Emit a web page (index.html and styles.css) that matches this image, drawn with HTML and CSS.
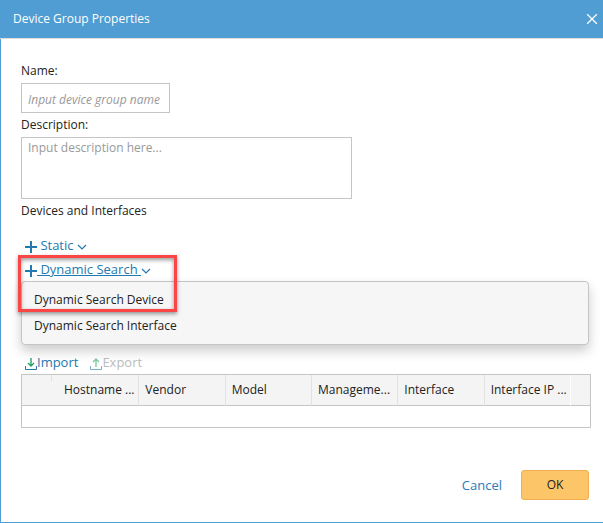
FILE: index.html
```html
<!DOCTYPE html>
<html lang="en">
<head>
<meta charset="utf-8">
<title>Device Group Properties</title>
<link rel="stylesheet" href="styles.css">
</head>
<body>
<form class="dialog">
  <header class="dialog-header">
    <h1 class="dialog-title">Device Group Properties</h1>
    <button class="close" type="button" aria-label="Close">
      <svg width="12" height="12" viewBox="0 0 12 12"><path d="M1.2 1.2 10.8 10.8M10.8 1.2 1.2 10.8"/></svg>
    </button>
  </header>
  <main class="dialog-body">
    <label class="label" for="name">Name:</label>
    <input class="field name" id="name" type="text" placeholder="Input device group name ...">
    <label class="label" for="description">Description:</label>
    <textarea class="field description" id="description" placeholder="Input description here..."></textarea>
    <p class="label">Devices and Interfaces</p>

    <div class="adders">
      <button class="action" type="button">
        <svg class="plus" width="12" height="12" viewBox="0 0 12 12"><path d="M6 0V12M0 6H12"/></svg>
        <span class="action-text">&nbsp;Static&nbsp;</span>
        <svg class="chevron" width="10" height="6" viewBox="0 0 10 6"><path d="M1 1 5 5 9 1"/></svg>
      </button>
      <div class="dynamic">
        <button class="action active" type="button">
          <svg class="plus" width="12" height="12" viewBox="0 0 12 12"><path d="M6 0V12M0 6H12"/></svg>
          <span class="action-text">&nbsp;Dynamic Search&nbsp;</span>
          <svg class="chevron" width="10" height="6" viewBox="0 0 10 6"><path d="M1 1 5 5 9 1"/></svg>
        </button>
        <div class="menu">
          <button class="menu-item" type="button">Dynamic Search Device</button>
          <button class="menu-item" type="button">Dynamic Search Interface</button>
        </div>
        <div class="callout"></div>
      </div>
    </div>

    <div class="transfer">
      <button class="action" type="button">
        <svg class="tray" width="12" height="12" viewBox="0 0 12 12"><path class="arrow" d="M6 0V8M3 5 6 8 9 5"/><path class="base" d="M.5 8V11.500H11.500V8"/></svg>
        <span>Import</span>
      </button>
      <button class="action" type="button" disabled>
        <svg class="tray" width="12" height="12" viewBox="0 0 12 12"><path class="arrow" d="M6 9V1M3 4 6 1 9 4"/><path class="base" d="M.5 8V11.500H11.500V8"/></svg>
        <span>Export</span>
      </button>
    </div>

    <table class="grid">
      <colgroup><col class="col-check"><col><col><col><col><col><col><col class="col-end"></colgroup>
      <thead>
        <tr><th class="check"></th><th>Hostname ...</th><th>Vendor</th><th>Model</th><th>Manageme...</th><th>Interface</th><th class="last">Interface IP ...</th><th class="end"></th></tr>
      </thead>
      <tbody><tr><td colspan="8"></td></tr></tbody>
    </table>
  </main>
  <footer class="dialog-footer">
    <button class="cancel" type="button">Cancel</button>
    <button class="ok" type="submit">OK</button>
  </footer>
</form>
</body>
</html>
```
FILE: styles.css
```css
* { box-sizing: border-box; }

body {
  margin: 0;
  font: 12px/24px "Open Sans", sans-serif;
  color: #222;
}

button {
  font: inherit;
  color: inherit;
  background: none;
  border: 0;
  padding: 0;
}

svg { fill: none; flex: none; }

.dialog {
  display: flex;
  flex-direction: column;
  min-height: 100vh;
  background: #fff;
  border: solid #4f9dd2;
  border-width: 0 0 1px 1px;
}

.dialog-header {
  display: flex;
  align-items: center;
  justify-content: space-between;
  height: 39px;
  padding: 0 5px 0 13px;
  margin-left: -1px;
  background: #4f9dd2;
  border-bottom: 1px solid #dcdcdc;
  color: #fff;
}

.dialog-title {
  margin: 0;
  font-size: 12px;
  font-weight: 500;
}

.close { display: flex; }
.close svg { stroke: #fff; stroke-width: 1.3; }

.dialog-body { padding: 20px 12px 0 20px; }

.label {
  display: block;
  margin: 0;
}

.field {
  display: block;
  border: 1px solid #c5c5c5;
  border-radius: 0;
  padding: 0 6px;
  background: #fff;
  font: 12px/20px "Open Sans", sans-serif;
  color: #222;
  resize: none;
}

.field::placeholder { color: #999; }
.name { width: 149px; height: 30px; padding: 2px 6px 0; }
.name::placeholder { font-style: italic; }
.description { width: 331px; height: 62px; }

.adders { margin-top: 10px; }

.action {
  display: flex;
  align-items: center;
  height: 24px;
  padding-left: 4px;
  font-size: 13px;
  color: #2279b0;
}

.action:disabled { color: #bbb; }
.active .action-text { text-decoration: underline; }
.plus { stroke: #2279b0; stroke-width: 2; margin-top: 4px; }
.chevron { stroke: #2279b0; stroke-width: 1.2; margin-top: 4px; }

.dynamic { position: relative; }

.menu {
  display: flex;
  flex-direction: column;
  margin-right: 2px;
  padding: 5px 0;
  background: #f6f6f6;
  border: 1px solid #c5c5c5;
  border-radius: 4px;
  box-shadow: 0 6px 12px rgba(0, 0, 0, .2);
}

.menu-item {
  height: 26px;
  padding-left: 12px;
  text-align: left;
}

.callout {
  position: absolute;
  top: -2px;
  left: -3px;
  width: 159px;
  height: 57px;
  border: 3px solid #fb4646;
  box-shadow: 0 2px 4px rgba(0, 0, 0, .4), inset 0 2px 4px rgba(0, 0, 0, .4);
  pointer-events: none;
}

.transfer {
  display: flex;
  gap: 8px;
  margin-top: 5px;
}

.tray { margin-top: 3px; }
.arrow { stroke: #27a668; stroke-width: 1.4; }
.base { stroke: #2279b0; }
:disabled .tray { opacity: .6; }

.grid {
  width: 100%;
  table-layout: fixed;
  border-collapse: separate;
  border-spacing: 0;
  border: 1px solid #c5c5c5;
}

.col-check { width: 31px; }
.col-end { width: 19px; }

th {
  height: 31px;
  padding: 0 2px 0 6px;
  background: #f4f4f4;
  border-right: 1px solid #e2e2e2;
  border-bottom: 1px solid #c5c5c5;
  font-weight: 400;
  text-align: left;
  white-space: nowrap;
}

.check {
  background: linear-gradient(#e2e2e2, #e2e2e2) 29px 0 / 1px 6px no-repeat #f4f4f4;
  border-right: 0;
}

.check + th { padding-left: 11px; }
.last { border-right-color: #fff; }
.end { border-right: 0; }
td { height: 21px; padding: 0; }

.dialog-footer {
  display: flex;
  justify-content: flex-end;
  align-items: center;
  gap: 19px;
  padding: 42px 14px 22px;
}

.cancel { font-size: 13px; color: #2d7ab8; }

.ok {
  width: 68px;
  height: 30px;
  background: #fcc567;
  border: 1px solid #eeb04e;
  border-radius: 3px;
}
```
